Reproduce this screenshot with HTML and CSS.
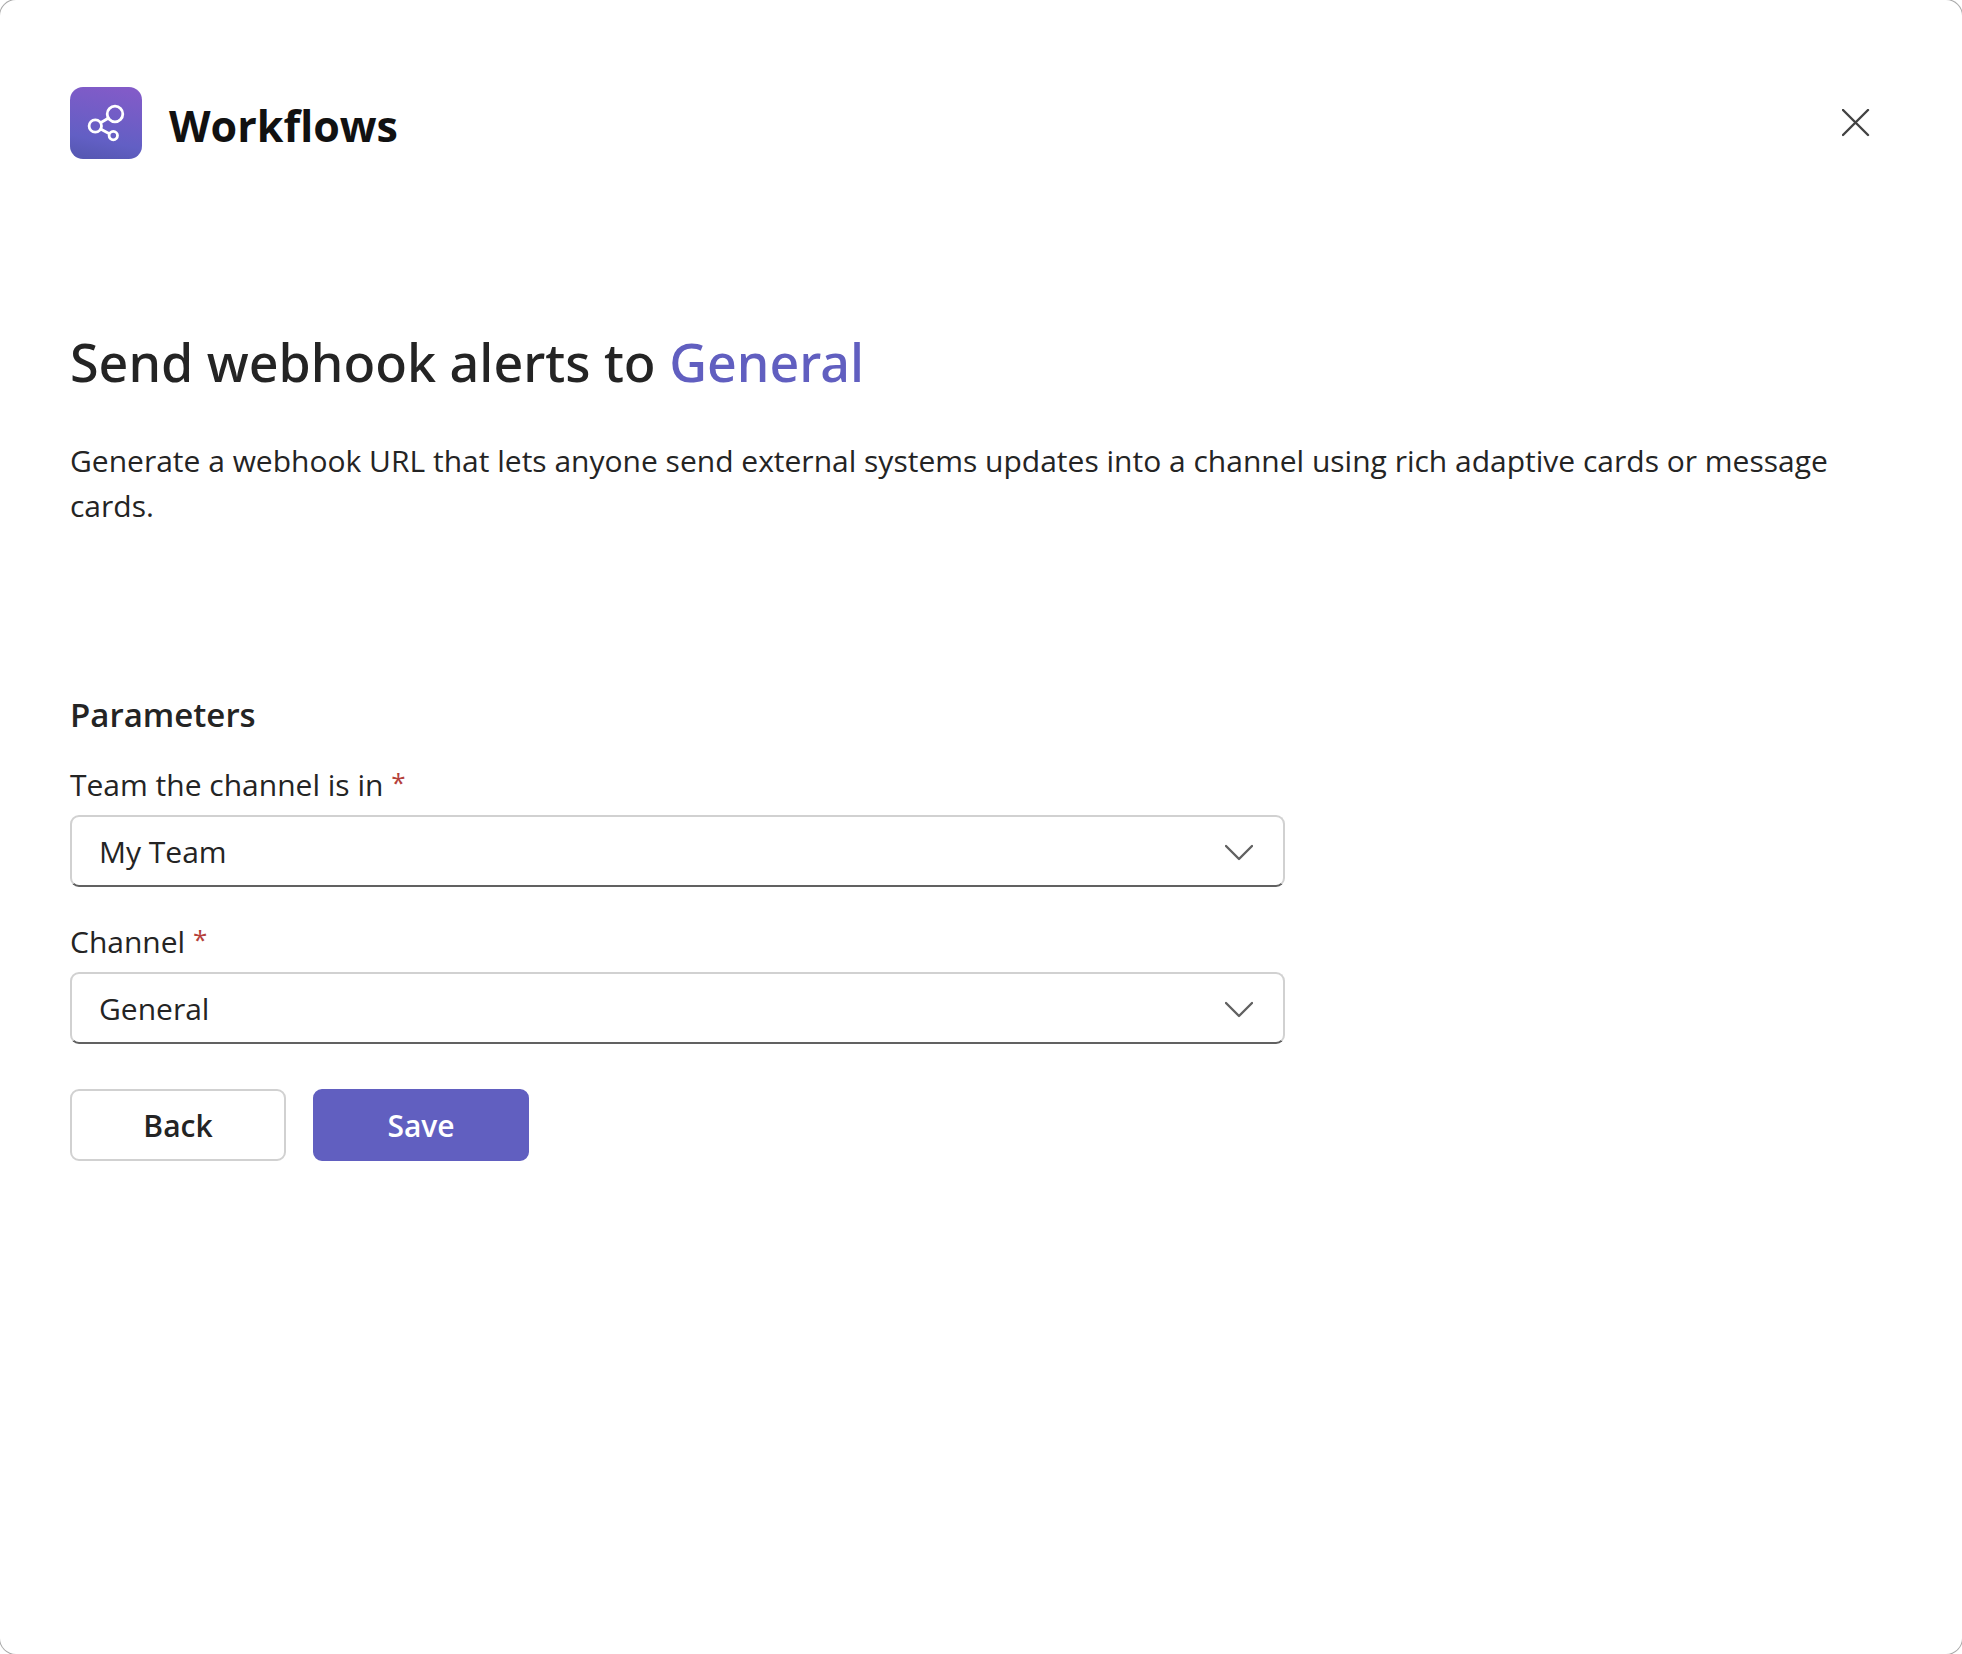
FILE: index.html
```html
<!DOCTYPE html>
<html lang="en">
<head>
    <meta charset="UTF-8">
    <meta name="viewport" content="width=device-width, initial-scale=1.0">
    <title>Workflows</title>
    <link rel="stylesheet" href="styles.css">
</head>
<body>
    <main class="dialog">
        <header class="dialog-header">
            <svg class="app-icon" viewBox="0 0 72 72" aria-hidden="true">
                <defs>
                    <linearGradient id="appIconFill" x1="0.6" y1="0" x2="0.4" y2="1">
                        <stop offset="0" stop-color="#825bc8"/>
                        <stop offset="0.75" stop-color="#625fc4"/>
                        <stop offset="1" stop-color="#5758b4"/>
                    </linearGradient>
                </defs>
                <rect width="72" height="72" rx="13" fill="url(#appIconFill)"/>
                <g fill="none" stroke="#fff" stroke-width="2.8">
                    <circle cx="45" cy="27" r="7.8"/>
                    <circle cx="25.3" cy="39" r="6.2"/>
                    <circle cx="43.3" cy="48.6" r="4.2"/>
                    <path d="M30.6 35.7l7.6-4.5M31 42.2l8.4 4.6"/>
                </g>
            </svg>
            <h2 class="app-name">Workflows</h2>
            <button class="close-button" type="button" aria-label="Close">
                <svg viewBox="0 0 28 28" aria-hidden="true">
                    <path d="M1 1l25 25M26 1L1 26"/>
                </svg>
            </button>
        </header>

        <section class="intro">
            <h1>Send webhook alerts to <span class="target">General</span></h1>
            <p>Generate a webhook URL that lets anyone send external systems updates into a channel using rich adaptive cards or message cards.</p>
        </section>

        <form class="parameters">
            <h3>Parameters</h3>

            <div class="field">
                <label for="team">Team the channel is in <span class="required">*</span></label>
                <div class="dropdown">
                    <select id="team" required>
                        <option>My Team</option>
                    </select>
                    <svg class="chevron" viewBox="0 0 28 20" aria-hidden="true">
                        <path d="M1 5l13 13L27 5"/>
                    </svg>
                </div>
            </div>

            <div class="field">
                <label for="channel">Channel <span class="required">*</span></label>
                <div class="dropdown">
                    <select id="channel" required>
                        <option>General</option>
                    </select>
                    <svg class="chevron" viewBox="0 0 28 20" aria-hidden="true">
                        <path d="M1 5l13 13L27 5"/>
                    </svg>
                </div>
            </div>

            <div class="actions">
                <button class="btn" type="button">Back</button>
                <button class="btn btn-primary" type="submit">Save</button>
            </div>
        </form>
    </main>
</body>
</html>
```

FILE: styles.css
```css
* {
    margin: 0;
    padding: 0;
    box-sizing: border-box;
}

body {
    background: #fff;
    color: #242424;
    font-family: "Segoe UI", "Open Sans", "Noto Sans", sans-serif;
    font-size: 30px;
    line-height: 45px;
}

.dialog {
    min-height: 100vh;
    padding: 87px 70px;
    background: #fff;
    border-radius: 16px;
    box-shadow: 0 0 0 1px #aaa;
}

.dialog-header {
    display: flex;
    align-items: center;
    gap: 27px;
}

.app-icon {
    width: 72px;
    height: 72px;
}

.app-name {
    padding-top: 6px;
    color: #111;
    font-size: 43px;
    font-weight: 700;
    line-height: 60px;
}

.close-button {
    display: flex;
    align-items: center;
    justify-content: center;
    width: 72px;
    height: 72px;
    margin-left: auto;
    background: transparent;
    border: none;
    cursor: pointer;
}

.close-button svg {
    width: 28px;
    height: 28px;
    fill: none;
    stroke: #424242;
    stroke-width: 2.4;
    stroke-linecap: round;
}

.intro {
    margin-top: 167px;
}

.intro h1 {
    font-family: "Segoe UI", "Noto Sans", sans-serif;
    font-size: 52px;
    font-weight: 500;
    line-height: 72px;
}

.intro .target {
    color: #615fc0;
}

.intro p {
    margin-top: 40px;
}

.parameters {
    margin-top: 162px;
}

.parameters h3 {
    font-size: 33px;
    font-weight: 600;
    line-height: 50px;
}

.field {
    width: 66.67%;
    margin-top: 32px;
}

.parameters h3 + .field {
    margin-top: 22px;
}

.field label {
    display: block;
    margin-bottom: 8px;
}

.required {
    color: #b5403a;
    font-size: 26px;
    line-height: 1;
    vertical-align: 4px;
}

/* select and chevron share one grid cell */
.dropdown {
    display: grid;
    align-items: center;
}

.dropdown select {
    grid-area: 1 / 1;
    width: 100%;
    height: 72px;
    padding: 0 72px 0 27px;
    appearance: none;
    background: #fff;
    border: 2px solid #d1d1d1;
    border-bottom-color: #616161;
    border-radius: 9px;
    color: inherit;
    font: inherit;
}

.chevron {
    grid-area: 1 / 1;
    justify-self: end;
    width: 28px;
    height: 20px;
    margin-right: 32px;
    fill: none;
    stroke: #616161;
    stroke-width: 2.4;
    stroke-linecap: round;
    stroke-linejoin: round;
    pointer-events: none;
}

.actions {
    display: flex;
    gap: 27px;
    margin-top: 45px;
}

.btn {
    width: 216px;
    height: 72px;
    background: #fff;
    border: 2px solid #d1d1d1;
    border-radius: 9px;
    color: #242424;
    font: inherit;
    font-weight: 600;
    cursor: pointer;
}

.btn-primary {
    background: #615fc0;
    border-color: #615fc0;
    color: #fff;
}
```
